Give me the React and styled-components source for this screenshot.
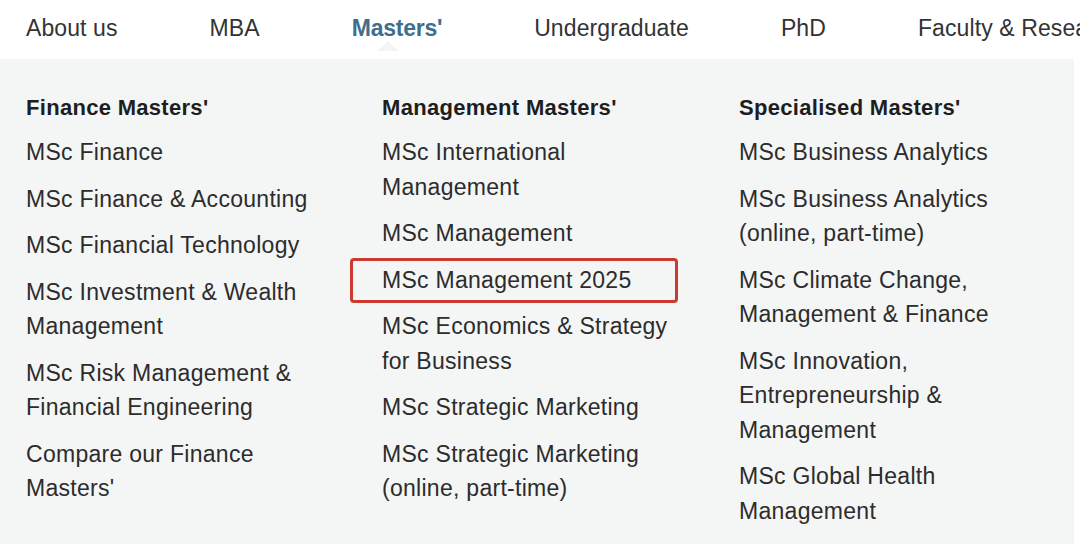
import React from "react";
import styled, { createGlobalStyle } from "styled-components";

const Global = createGlobalStyle`
  html, body { margin: 0; padding: 0; background: #ffffff; }
  body { font-family: "Liberation Sans", Arial, sans-serif; overflow: hidden; }
  * { box-sizing: border-box; }
`;

const Page = styled.div`
  width: 1080px;
  height: 544px;
  background: #ffffff;
  overflow: hidden;
`;

const Nav = styled.nav`
  position: relative;
  height: 59px;
  display: flex;
  align-items: center;
  gap: 92px;
  padding: 0 0 4px 26px;
  white-space: nowrap;
  background: #ffffff;
`;

const NavItem = styled.a`
  position: relative;
  font-size: 23px;
  letter-spacing: ${(p) => (p.$active ? "-0.25px" : "0.1px")};
  line-height: 30px;
  color: ${(p) => (p.$active ? "#3d6e8c" : "#333333")};
  font-weight: ${(p) => (p.$active ? 700 : 400)};
  text-decoration: none;
  flex: none;
`;

const Caret = styled.span`
  position: absolute;
  left: 50%;
  margin-left: -20px;
  top: 28px;
  width: 0;
  height: 0;
  border-left: 11px solid transparent;
  border-right: 11px solid transparent;
  border-bottom: 10px solid #f4f5f5;
`;

const Panel = styled.div`
  width: 1074px;
  height: 485px;
  background: #f4f5f5;
  display: grid;
  grid-template-columns: 356px 357px 335px;
  padding: 31px 0 0 26px;
`;

const Column = styled.div`
  display: flex;
  flex-direction: column;
`;

const Heading = styled.h3`
  margin: 0 0 10px;
  font-size: 22px;
  letter-spacing: 0.3px;
  line-height: 35px;
  font-weight: 700;
  color: #1e1e1e;
`;

const List = styled.ul`
  list-style: none;
  margin: 0;
  padding: 0;
  display: flex;
  flex-direction: column;
  gap: 12px;
`;

const Item = styled.li`
  position: relative;
  width: 300px;
  font-size: 23px;
  letter-spacing: 0.28px;
  line-height: 34.5px;
  color: #2c2c2c;
`;

const Highlight = styled.span`
  position: absolute;
  left: -32px;
  right: 4px;
  top: -5px;
  bottom: -6px;
  border: 3px solid #cc3a2f;
  border-radius: 4px;
  pointer-events: none;
`;

const columns = [
  {
    title: "Finance Masters'",
    items: [
      "MSc Finance",
      "MSc Finance & Accounting",
      "MSc Financial Technology",
      "MSc Investment & Wealth Management",
      "MSc Risk Management & Financial Engineering",
      "Compare our Finance Masters'",
    ],
  },
  {
    title: "Management Masters'",
    items: [
      "MSc International Management",
      "MSc Management",
      "MSc Management 2025",
      "MSc Economics & Strategy for Business",
      "MSc Strategic Marketing",
      "MSc Strategic Marketing (online, part-time)",
    ],
    highlight: "MSc Management 2025",
  },
  {
    title: "Specialised Masters'",
    items: [
      "MSc Business Analytics",
      "MSc Business Analytics (online, part-time)",
      "MSc Climate Change, Management & Finance",
      "MSc Innovation, Entrepreneurship & Management",
      "MSc Global Health Management",
    ],
  },
];

const navItems = ["About us", "MBA", "Masters'", "Undergraduate", "PhD", "Faculty & Research"];

export default function App() {
  return (
    <Page>
      <Global />
      <Nav>
        {navItems.map((n) => (
          <NavItem key={n} $active={n === "Masters'"}>
            {n}
            {n === "Masters'" && <Caret />}
          </NavItem>
        ))}
      </Nav>
      <Panel>
        {columns.map((c) => (
          <Column key={c.title}>
            <Heading>{c.title}</Heading>
            <List>
              {c.items.map((it) => (
                <Item key={it}>
                  {it}
                  {c.highlight === it && <Highlight />}
                </Item>
              ))}
            </List>
          </Column>
        ))}
      </Panel>
    </Page>
  );
}
